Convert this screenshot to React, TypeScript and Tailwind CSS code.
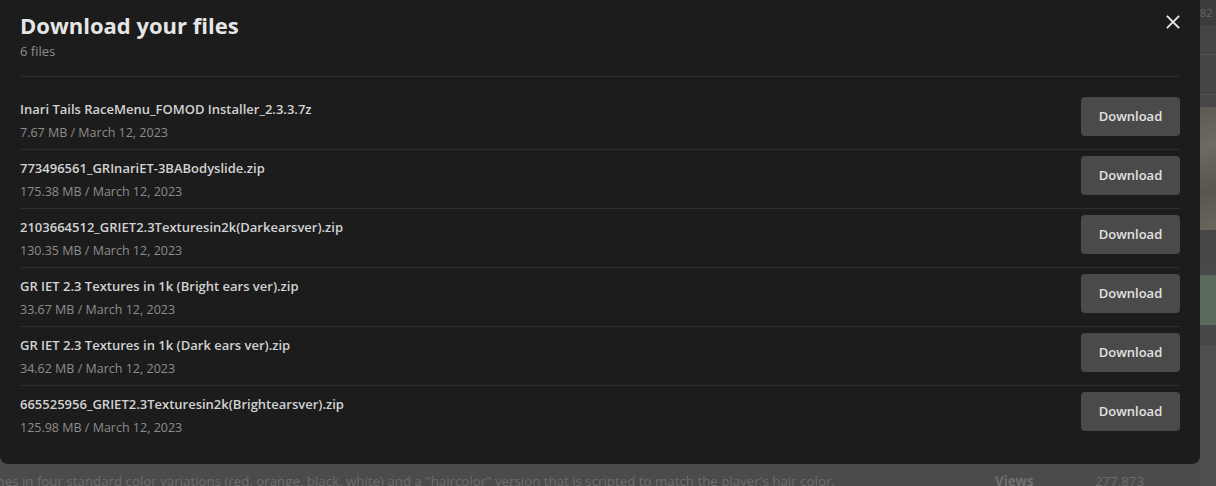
import React from "react";

const files = [
  { name: "Inari Tails RaceMenu_FOMOD Installer_2.3.3.7z", meta: "7.67 MB / March 12, 2023" },
  { name: "773496561_GRInariET-3BABodyslide.zip", meta: "175.38 MB / March 12, 2023" },
  { name: "2103664512_GRIET2.3Texturesin2k(Darkearsver).zip", meta: "130.35 MB / March 12, 2023" },
  { name: "GR IET 2.3 Textures in 1k (Bright ears ver).zip", meta: "33.67 MB / March 12, 2023" },
  { name: "GR IET 2.3 Textures in 1k (Dark ears ver).zip", meta: "34.62 MB / March 12, 2023" },
  { name: "665525956_GRIET2.3Texturesin2k(Brightearsver).zip", meta: "125.98 MB / March 12, 2023" },
];

export default function App() {
  return (
    <div
      className="relative w-[1216px] h-[486px] overflow-hidden bg-[#4b4b4b]"
      style={{ fontFamily: '"Open Sans", "Noto Sans", sans-serif' }}
    >
      {/* background page */}
      <div className="flex h-full">
        <div className="flex-1 flex flex-col justify-end">
          <div className="flex items-end h-[22px] mb-[-6px] text-[13.3px] leading-[22px] text-[#6c6c6c] whitespace-nowrap">
            <span className="ml-[-22px] w-[1017px]">
              comes in four standard color variations (red, orange, black, white) and a "haircolor" version that is scripted to match the player's hair color.
            </span>
            <span className="font-bold text-[#707070] w-[100px]">Views</span>
            <span>277,873</span>
          </div>
        </div>
        <div className="w-[16px] flex flex-col">
          <div className="h-[25px] bg-[#3c3c3c] text-[11px] text-[#666] leading-[25px]">82</div>
          <div className="h-[30px] bg-[#444] border-b border-[#525252]"></div>
          <div className="h-[40px] bg-[#444] border-b border-[#525252]"></div>
          <div className="h-[12px] bg-[#464646]"></div>
          <div className="h-[123px] bg-[linear-gradient(160deg,#5c5954,#6e6a62,#58554f,#6a665e)]"></div>
          <div className="h-[35px] bg-[#474747]"></div>
          <div className="h-[10px] bg-[#4a4a4a]"></div>
          <div className="h-[50px] bg-[#5b6a5b]"></div>
          <div className="h-[20px] bg-[#474747]"></div>
          <div className="flex-1 bg-[#4f4f4f]"></div>
        </div>
      </div>

      {/* modal */}
      <div className="absolute left-0 top-0 w-[1200px] h-[464px] bg-[#1c1c1c] rounded-b-[8px] px-[20px] pt-[10px]">
        <div className="flex items-start justify-between">
          <div>
            <h2 className="text-[22px] leading-[30px] font-bold text-[#e6e6e6]">Download your files</h2>
            <div className="mt-[2px] text-[13px] leading-[18px] text-[#8c8c8c]">6 files</div>
          </div>
          <button className="mt-[0px] w-[24px] h-[24px] flex items-center justify-center text-[#e6e6e6] mr-[-5px]">
            <svg width="16" height="16" viewBox="0 0 16 16" fill="none" stroke="currentColor" strokeWidth="1.8" strokeLinecap="square">
              <path d="M2.5 2.5L13.5 13.5M13.5 2.5L2.5 13.5" />
            </svg>
          </button>
        </div>
        <div className="mt-[16px] border-t border-[#2e2e2e]" />
        <div className="pt-[14px]">
          {files.map((f, i) => (
            <div
              key={i}
              className={`flex items-start justify-between pt-[6px] pb-[6px] ${i < files.length - 1 ? "border-b border-[#2e2e2e]" : ""}`}
            >
              <div className="pt-[2px]">
                <div className="text-[13px] leading-[20px] font-semibold text-[#d2d2d2]">{f.name}</div>
                <div className="mt-[4px] text-[12.5px] leading-[20px] text-[#8c8c8c]">{f.meta}</div>
              </div>
              <button className="w-[99px] h-[39px] rounded-[4px] bg-[#4a4a4a] text-[13px] font-semibold text-[#e2e2e2]">
                Download
              </button>
            </div>
          ))}
        </div>
      </div>
    </div>
  );
}
